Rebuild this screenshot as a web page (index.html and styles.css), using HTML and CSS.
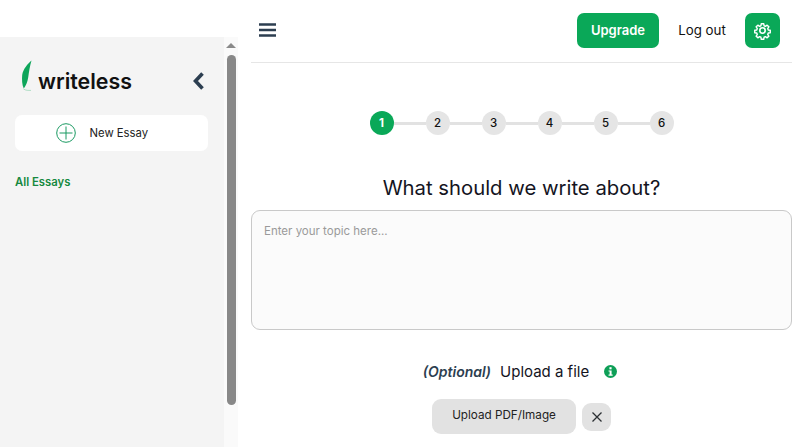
FILE: index.html
```html
<!DOCTYPE html>
<html lang="en">
<head>
<meta charset="utf-8">
<title>Writeless</title>
<link rel="stylesheet" href="styles.css">
</head>
<body>
<div class="app">
  <aside class="sidebar">
    <div class="side-content">
      <div class="brand-row">
        <div class="brand">
          <svg class="quill" width="16" height="32" viewBox="0 0 16 32">
            <path d="M11.5 .5 C8 3.5 3 9 2.2 15 C1.8 19 2 25 3.8 28.5 C5.8 26 7.5 22 8.2 17.5 C9 12 9.8 6 11.5 .5 Z" fill="#0ea55a"/>
            <path d="M3.5 29 C6 30.6 8 30.4 11 30.4" stroke="#9fd8ba" stroke-width="0.8" fill="none"/>
          </svg>
          <span class="brand-name">writeless</span>
        </div>
        <svg class="collapse" width="14" height="20" viewBox="0 0 14 20">
          <path d="M10.5 2.5 L3.5 10 L10.5 17.5" fill="none" stroke="#2c3e50" stroke-width="3.6"/>
        </svg>
      </div>
      <button class="new-essay">
        <svg width="20" height="20" viewBox="0 0 20 20">
          <circle cx="10" cy="10" r="9.3" fill="none" stroke="#1a9a62" stroke-width="1"/>
          <path d="M10 3.5 V16.5 M3.5 10 H16.5" stroke="#1a9a62" stroke-width="1"/>
        </svg>
        <span>New Essay</span>
      </button>
      <a class="all-essays">All Essays</a>
    </div>
    <div class="scroll">
      <div class="arrow"></div>
      <div class="thumb"></div>
    </div>
  </aside>
  <main class="main">
    <header class="topbar">
      <svg class="menu" width="18" height="16" viewBox="0 0 18 16">
        <path d="M0 2.5 H17 M0 8 H17 M0 13.5 H17" stroke="#2c3e50" stroke-width="2.6"/>
      </svg>
      <div class="actions">
        <button class="upgrade">Upgrade</button>
        <span class="logout">Log out</span>
        <button class="gear">
          <svg width="19" height="19" viewBox="0 0 24 24" fill="none" stroke="#fff" stroke-width="2" stroke-linejoin="round">
            <path d="M10.3 2.5h3.4l.5 2.8 1.9.8 2.4-1.6 2.4 2.4-1.6 2.4.8 1.9 2.8.5v3.4l-2.8.5-.8 1.9 1.6 2.4-2.4 2.4-2.4-1.6-1.9.8-.5 2.8h-3.4l-.5-2.8-1.9-.8-2.4 1.6-2.4-2.4 1.6-2.4-.8-1.9-2.8-.5v-3.4l2.8-.5.8-1.9-1.6-2.4 2.4-2.4 2.4 1.6 1.9-.8z" transform="translate(1.2 1.2) scale(.9)"/>
            <circle cx="12" cy="12" r="3.4"/>
          </svg>
        </button>
      </div>
    </header>
    <div class="steps">
      <span class="step active">1</span><span class="line"></span>
      <span class="step">2</span><span class="line"></span>
      <span class="step">3</span><span class="line"></span>
      <span class="step">4</span><span class="line"></span>
      <span class="step">5</span><span class="line"></span>
      <span class="step">6</span>
    </div>
    <h1 class="title">What should we write about?</h1>
    <div class="topic">Enter your topic here...</div>
    <div class="upload-label">
      <em>(Optional)</em>
      <span>Upload a file</span>
      <svg width="13" height="13" viewBox="0 0 12 12">
        <circle cx="6" cy="6" r="6" fill="#0e9f57"/>
        <rect x="5" y="2" width="2" height="2" fill="#fff"/>
        <path d="M4.2 5 H7 V8.8 H8 V10 H4.2 V8.8 H5.2 V6.1 H4.2 Z" fill="#fff"/>
      </svg>
    </div>
    <div class="upload-row">
      <button class="upload">Upload PDF/Image</button>
      <button class="clear">
        <svg width="12" height="12" viewBox="0 0 12 12">
          <path d="M1.5 1.5 L10.5 10.5 M10.5 1.5 L1.5 10.5" stroke="#2b2f33" stroke-width="1.3"/>
        </svg>
      </button>
    </div>
  </main>
</div>
</body>
</html>
```

FILE: styles.css
```css
* { box-sizing: border-box; }
html, body { margin: 0; height: 100%; overflow: hidden; background: #fff; }
body { font-family: "Inter", "Liberation Sans", sans-serif; color: #111; }
button { font-family: inherit; border: 0; padding: 0; cursor: pointer; }

.app { display: flex; height: 447px; }

.sidebar { display: flex; width: 238px; margin-top: 37px; flex: none; }
.side-content { width: 224px; background: #f4f4f4; padding: 0 16px 0 15px; }
.brand-row { display: flex; align-items: center; justify-content: space-between; height: 78px; padding-top: 10px; }
.brand { display: flex; align-items: flex-end; gap: 1px; padding-left: 5px; margin-bottom: 9px; }
.quill { margin-bottom: 2px; }
.brand-name { font-size: 21.4px; font-weight: 600; color: #111; line-height: 25px; margin-left: 1px; }
.collapse { margin-right: 2px; }
.new-essay { display: flex; align-items: center; width: 193px; height: 36px; background: #fff; border-radius: 7px; padding-left: 41px; gap: 13.5px; font-size: 11.3px; color: #222; }
.all-essays { display: block; margin-top: 24px; font-size: 11.3px; font-weight: 600; color: #15893f; line-height: 14px; }

.scroll { width: 14px; background: #fafafa; padding: 0 2px; }
.arrow { width: 0; height: 0; margin: 6px auto 0; border: 5px solid transparent; border-top: 0; border-bottom: 5px solid #8a8a8a; }
.thumb { width: 9px; height: 350px; margin: 7px auto 0; background: #888; border-radius: 5px; }

.main { width: 541px; margin-left: 13px; flex: none; display: flex; flex-direction: column; align-items: center; }
.topbar { display: flex; align-items: center; justify-content: space-between; width: 100%; height: 63px; border-bottom: 1px solid #e6e6e6; padding: 0 12px 2px 8px; }
.menu { display: block; }
.actions { display: flex; align-items: center; }
.upgrade { width: 82px; height: 35px; border-radius: 7px; background: #0aa858; color: #fff; font-size: 13px; font-weight: 600; }
.logout { width: 86px; text-align: center; font-size: 13.3px; color: #111; }
.gear { width: 35px; height: 35px; border-radius: 7px; background: #0aa858; display: flex; align-items: center; justify-content: center; }

.steps { display: flex; align-items: center; margin-top: 48px; }
.step { width: 24px; height: 24px; border-radius: 50%; background: #e5e5e5; display: flex; align-items: center; justify-content: center; font-size: 11.5px; font-weight: 500; color: #111; }
.step.active { background: #0aa858; color: #fff; font-weight: 700; }
.line { width: 32px; height: 3px; background: #e2e2e2; }

.title { margin: 40px 0 0; font-size: 20.3px; font-weight: 400; line-height: 26px; color: #14141e; }
.topic { width: 100%; height: 120px; margin-top: 9px; background: #fbfbfb; border: 1px solid #c9c9c9; border-radius: 9px; padding: 13px 12px; font-size: 11.5px; line-height: 14px; color: #9a9a9a; }
.upload-label { display: flex; align-items: center; margin-top: 32px; height: 18px; padding-right: 3px; font-size: 15px; color: #14141e; }
.upload-label em { font-weight: 600; font-size: 14px; color: #2c3e50; margin-right: 9px; }
.upload-label svg { margin-left: 15px; }
.upload-row { display: flex; align-items: center; gap: 6px; margin-top: 19px; }
.upload { width: 144px; height: 35px; border-radius: 9px; padding-bottom: 3px; background: #e2e2e2; font-size: 11.7px; color: #222; }
.clear { width: 29px; height: 28px; border-radius: 9px; background: #e2e2e2; display: flex; align-items: center; justify-content: center; }
```
